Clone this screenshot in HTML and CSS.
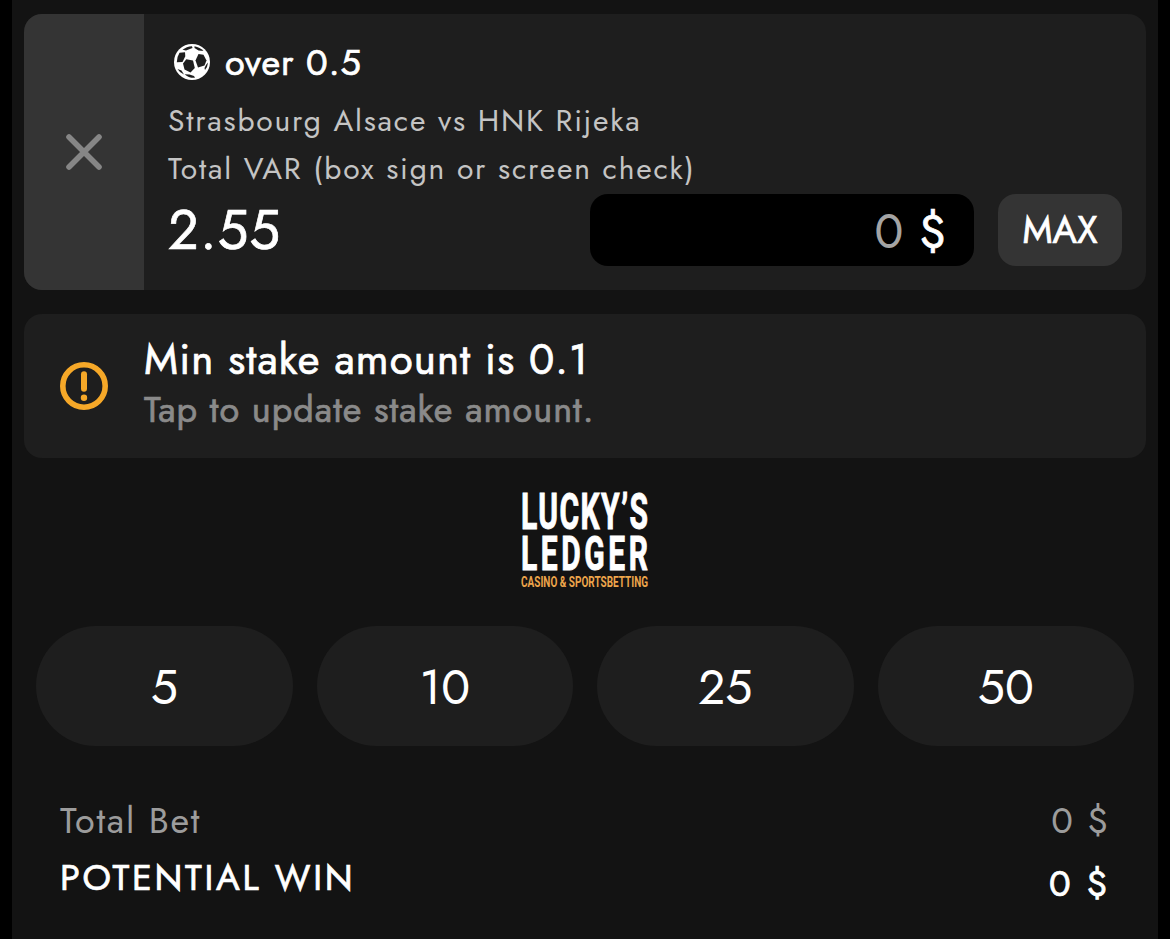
FILE: index.html
```html
<!DOCTYPE html>
<html lang="en">
<head>
    <meta charset="UTF-8">
    <meta name="viewport" content="width=device-width, initial-scale=1.0">
    <title>Betslip</title>
    <link rel="stylesheet" href="styles.css">
</head>
<body>
    <div class="betslip">
        <div class="card bet">
            <button class="remove" aria-label="Remove bet">
                <svg width="38" height="38" viewBox="0 0 38 38">
                    <path d="M4 4L34 34M34 4L4 34" stroke="#868686" stroke-width="5.6" stroke-linecap="round"/>
                </svg>
            </button>
            <div class="bet-info">
                <div class="outcome">
                    <svg class="ball" width="36" height="36" viewBox="0 0 36 36">
                        <circle cx="18" cy="18" r="18" fill="#fff"/>
                        <g fill="#1e1e1e">
                            <path d="M8.5 5.8Q12.5 2.5 18 2.2L18.5 4L12 6.5Z"/>
                            <path d="M20.5 2.3Q26 3.2 29.5 7L24.5 6.5L20.5 4Z"/>
                            <path d="M5.5 8.8L11 8.3L11.3 12.3L8.5 18L2.8 18.2Q2.6 13.5 5.5 8.8Z"/>
                            <path d="M12.3 15.2L19 16.5L20.8 24L16.5 28.5L10.5 25.5L9 19.5Z"/>
                            <path d="M24.5 10L29.5 10.8L32.5 16.5L30.5 21.5L24 23.5L21.5 16.5Z"/>
                            <path d="M32.3 20.5L34 18.5Q33.5 23.5 31 26L30.5 24Z"/>
                            <path d="M3.5 25L7.5 26.5L10 30.5Q5.5 28.5 3.5 25Z"/>
                            <path d="M10.5 30.2L15.5 30.5L20 32L21 33.8Q15 34.3 10.5 30.2Z"/>
                        </g>
                    </svg>
                    <span>over 0.5</span>
                </div>
                <div class="match">Strasbourg Alsace vs HNK Rijeka</div>
                <div class="market">Total VAR (box sign or screen check)</div>
                <div class="stake-row">
                    <div class="odds">2.55</div>
                    <div class="stake"><span class="amount">0</span><span class="currency">$</span></div>
                    <button class="max">MAX</button>
                </div>
            </div>
        </div>

        <div class="card alert">
            <svg width="48" height="48" viewBox="0 0 48 48">
                <circle cx="24" cy="24" r="21.2" fill="none" stroke="#f6a828" stroke-width="5.6"/>
                <path d="M24 12.2V26.8" stroke="#f6a828" stroke-width="6" stroke-linecap="round"/>
                <circle cx="24" cy="35.8" r="3.2" fill="#f6a828"/>
            </svg>
            <div>
                <div class="alert-title">Min stake amount is 0.1</div>
                <div class="alert-text">Tap to update stake amount.</div>
            </div>
        </div>

        <svg class="logo" width="134" height="104" viewBox="-2 -4 134 104">
            <g class="logo-name">
                <text transform="translate(1 39) scale(1 1.64)" textLength="127" lengthAdjust="spacing">LUCKY’S</text>
                <text transform="translate(1 79.5) scale(1 1.58)" textLength="127" lengthAdjust="spacing">LEDGER</text>
            </g>
            <text class="logo-tag" transform="translate(1 96.5) scale(1 1.4)" textLength="127" lengthAdjust="spacingAndGlyphs">CASINO &amp; SPORTSBETTING</text>
        </svg>

        <div class="chips">
            <button class="chip">5</button>
            <button class="chip">10</button>
            <button class="chip">25</button>
            <button class="chip">50</button>
        </div>

        <div class="totals">
            <div class="total-row">
                <span class="total-label">Total Bet</span>
                <span class="total-value">0 $</span>
            </div>
            <div class="total-row win">
                <span class="win-label">POTENTIAL WIN</span>
                <span class="win-value">0 $</span>
            </div>
        </div>
    </div>
</body>
</html>
```
FILE: styles.css
```css
* {
    box-sizing: border-box;
}
body {
    margin: 0;
    background: #000;
    color: #fff;
    font-family: Jost, Lato, sans-serif;
    white-space: nowrap;
    overflow: hidden;
}
button {
    border: none;
    padding: 0;
    color: inherit;
    font-family: inherit;
    cursor: pointer;
}
.betslip {
    height: 939px;
    margin: 0 12px;
    padding: 14px 12px 0;
    background: #131313;
}
.card {
    display: flex;
    background: #1e1e1e;
    border-radius: 18px;
    overflow: hidden;
}
.bet {
    height: 276px;
}
.remove {
    display: flex;
    align-items: center;
    justify-content: center;
    width: 120px;
    background: #343434;
}
.bet-info {
    flex: 1;
    padding: 24px;
}
/* slightly heavier than regular */
.outcome, .odds, .currency, .max, .alert-title, .alert-text, .win {
    -webkit-text-stroke: 0.7px currentColor;
}
.outcome {
    display: flex;
    align-items: center;
    height: 48px;
    margin-bottom: 12px;
    padding-left: 6px;
    gap: 15px;
    font-size: 36px;
    letter-spacing: 1px;
    line-height: 46px;
}
.match, .market {
    color: #c4c4c4;
    font-size: 30px;
    line-height: 46px;
    height: 48px;
    letter-spacing: 1.8px;
}
.stake-row {
    display: flex;
    align-items: center;
    gap: 24px;
    height: 72px;
}
.odds {
    flex: 1;
    padding-bottom: 1px;
    font-size: 54px;
    letter-spacing: 1.4px;
}
.stake {
    display: flex;
    align-items: center;
    justify-content: flex-end;
    gap: 16px;
    width: 384px;
    height: 72px;
    padding: 3px 28px 0 0;
    background: #000;
    border-radius: 18px;
    font-size: 48px;
}
.amount {
    color: #a4a4a4;
}
.currency {
    font-size: 46px;
}
.max {
    width: 124px;
    height: 72px;
    background: #343434;
    border-radius: 18px;
    font-size: 37px;
}
.alert {
    align-items: center;
    gap: 36px;
    height: 144px;
    margin-top: 24px;
    padding: 0 36px 5px;
}
.alert svg {
    margin-top: 5px;
}
.alert-title {
    font-size: 42px;
    line-height: 52px;
    letter-spacing: 1.15px;
}
.alert-text {
    color: #8a8a8a;
    font-size: 36px;
    line-height: 47px;
    letter-spacing: 1px;
}
.logo {
    display: block;
    margin: 28px auto 0;
}
.logo-name {
    fill: #fff;
    stroke: #fff;
    stroke-width: 0.6px;
    font-family: Roboto, sans-serif;
    font-size: 30px;
    font-weight: 700;
}
.logo-tag {
    fill: #eda54b;
    font-family: Roboto, sans-serif;
    font-size: 11px;
    font-weight: 700;
}
.chips {
    display: grid;
    grid-template-columns: repeat(4, 1fr);
    gap: 24px;
    margin-top: 36px;
    padding: 0 12px;
}
.chip {
    height: 120px;
    padding-top: 3px;
    background: #1e1e1e;
    border-radius: 60px;
    font-size: 48px;
}
.totals {
    padding: 44px 36px 0 36px;
}
.total-row {
    display: flex;
    justify-content: space-between;
    height: 60px;
    line-height: 60px;
    color: #9c9c9c;
    font-size: 36px;
    letter-spacing: 1.8px;
}
.win {
    color: #fff;
}
.win-label {
    line-height: 55px;
    letter-spacing: 2.7px;
}
.win-value {
    padding-top: 3px;
    letter-spacing: 2.6px;
}
```
